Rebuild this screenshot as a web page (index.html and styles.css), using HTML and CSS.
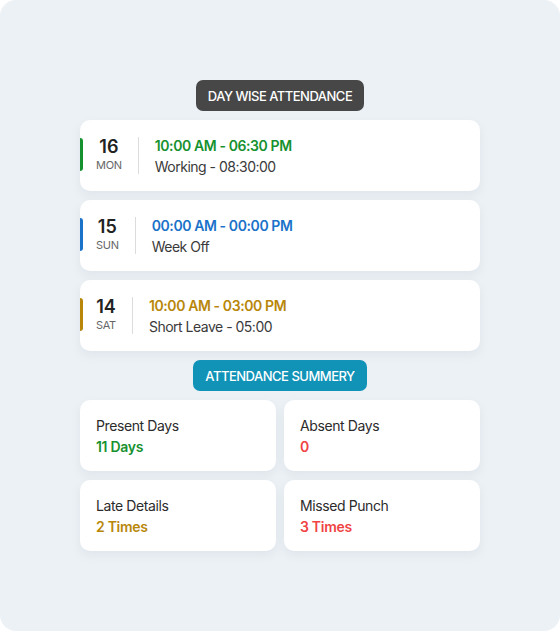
FILE: index.html
```html
<!DOCTYPE html>
<html>
<head>
<meta charset="utf-8">
<link rel="stylesheet" href="styles.css">
</head>
<body>
<div class="frame">
  <div class="content">
    <div class="pill pill-dark">DAY WISE ATTENDANCE</div>
    <div class="day-list">
      <div class="day-card">
        <span class="accent accent-green"></span>
        <div class="date">
          <div class="date-num">16</div>
          <div class="date-day">MON</div>
        </div>
        <div class="divider"></div>
        <div class="info">
          <div class="time green">10:00 AM - 06:30 PM</div>
          <div class="status">Working - 08:30:00</div>
        </div>
      </div>
      <div class="day-card">
        <span class="accent accent-blue"></span>
        <div class="date">
          <div class="date-num">15</div>
          <div class="date-day">SUN</div>
        </div>
        <div class="divider"></div>
        <div class="info">
          <div class="time blue">00:00 AM - 00:00 PM</div>
          <div class="status">Week Off</div>
        </div>
      </div>
      <div class="day-card">
        <span class="accent accent-gold"></span>
        <div class="date">
          <div class="date-num">14</div>
          <div class="date-day">SAT</div>
        </div>
        <div class="divider"></div>
        <div class="info">
          <div class="time gold">10:00 AM - 03:00 PM</div>
          <div class="status">Short Leave - 05:00</div>
        </div>
      </div>
    </div>
    <div class="pill pill-teal">ATTENDANCE SUMMERY</div>
    <div class="summary-grid">
      <div class="sum-card">
        <div class="sum-label">Present Days</div>
        <div class="sum-value green">11 Days</div>
      </div>
      <div class="sum-card">
        <div class="sum-label">Absent Days</div>
        <div class="sum-value red">0</div>
      </div>
      <div class="sum-card">
        <div class="sum-label">Late Details</div>
        <div class="sum-value gold">2 Times</div>
      </div>
      <div class="sum-card">
        <div class="sum-label">Missed Punch</div>
        <div class="sum-value red">3 Times</div>
      </div>
    </div>
  </div>
</div>
</body>
</html>
```

FILE: styles.css
```css
* { box-sizing: border-box; }
html, body { margin: 0; padding: 0; background: #ffffff; }
body {
  font-family: "Inter", "Open Sans", sans-serif;
  color: #2b2b2b;
}
.frame {
  width: 560px;
  height: 631px;
  background: #ecf1f5;
  border-radius: 16px;
  display: flex;
  align-items: flex-start;
  justify-content: center;
  padding-top: 80px;
}
.content {
  width: 400px;
  display: flex;
  flex-direction: column;
  align-items: center;
}
.pill {
  height: 31px;
  border-radius: 7px;
  color: #ffffff;
  font-size: 13px;
  font-weight: 500;
  display: flex;
  align-items: center;
  padding: 0 12px;
  letter-spacing: -0.5px;
}
.pill-dark { background: #474747; }
.pill-teal { background: #1193b8; }
.day-list {
  width: 100%;
  margin-top: 9px;
  margin-bottom: 9px;
  display: flex;
  flex-direction: column;
  gap: 9px;
}
.day-card {
  position: relative;
  height: 71px;
  background: #ffffff;
  border-radius: 10px;
  box-shadow: 0 4px 10px rgba(160, 175, 195, 0.18);
  display: flex;
  align-items: center;
  padding-left: 16px;
}
.accent {
  position: absolute;
  left: 0;
  top: 18px;
  width: 3px;
  height: 33px;
  border-radius: 0 3px 3px 0;
}
.accent-green { background: #16912f; }
.accent-blue { background: #1a72c9; }
.accent-gold { background: #b8870a; }
.date {
  display: flex;
  flex-direction: column;
  align-items: center;
  line-height: 1;
  margin-top: -2px;
}
.date-num {
  font-size: 18px;
  font-weight: 600;
  color: #222;
}
.date-day {
  font-size: 11px;
  color: #666;
  margin-top: 4px;
  letter-spacing: -0.3px;
}
.divider {
  width: 1px;
  height: 37px;
  background: #dcdcdc;
  margin: 0 16px;
}
.info { display: flex; flex-direction: column; gap: 4px; }
.time { font-size: 14px; font-weight: 600; letter-spacing: -0.4px; }
.status { font-size: 14px; color: #3a3a3a; letter-spacing: -0.5px; }
.green { color: #16912f; }
.blue { color: #1a72c9; }
.gold { color: #b8870a; }
.red { color: #f04444; }
.summary-grid {
  width: 100%;
  margin-top: 9px;
  display: grid;
  grid-template-columns: 1fr 1fr;
  gap: 9px 8px;
}
.sum-card {
  height: 71px;
  background: #ffffff;
  border-radius: 10px;
  box-shadow: 0 4px 10px rgba(160, 175, 195, 0.18);
  padding: 0 16px;
  display: flex;
  flex-direction: column;
  justify-content: center;
  gap: 4px;
}
.sum-label { font-size: 14px; color: #2b2b2b; letter-spacing: -0.4px; }
.sum-value { font-size: 14px; font-weight: 600; letter-spacing: -0.3px; }
```
